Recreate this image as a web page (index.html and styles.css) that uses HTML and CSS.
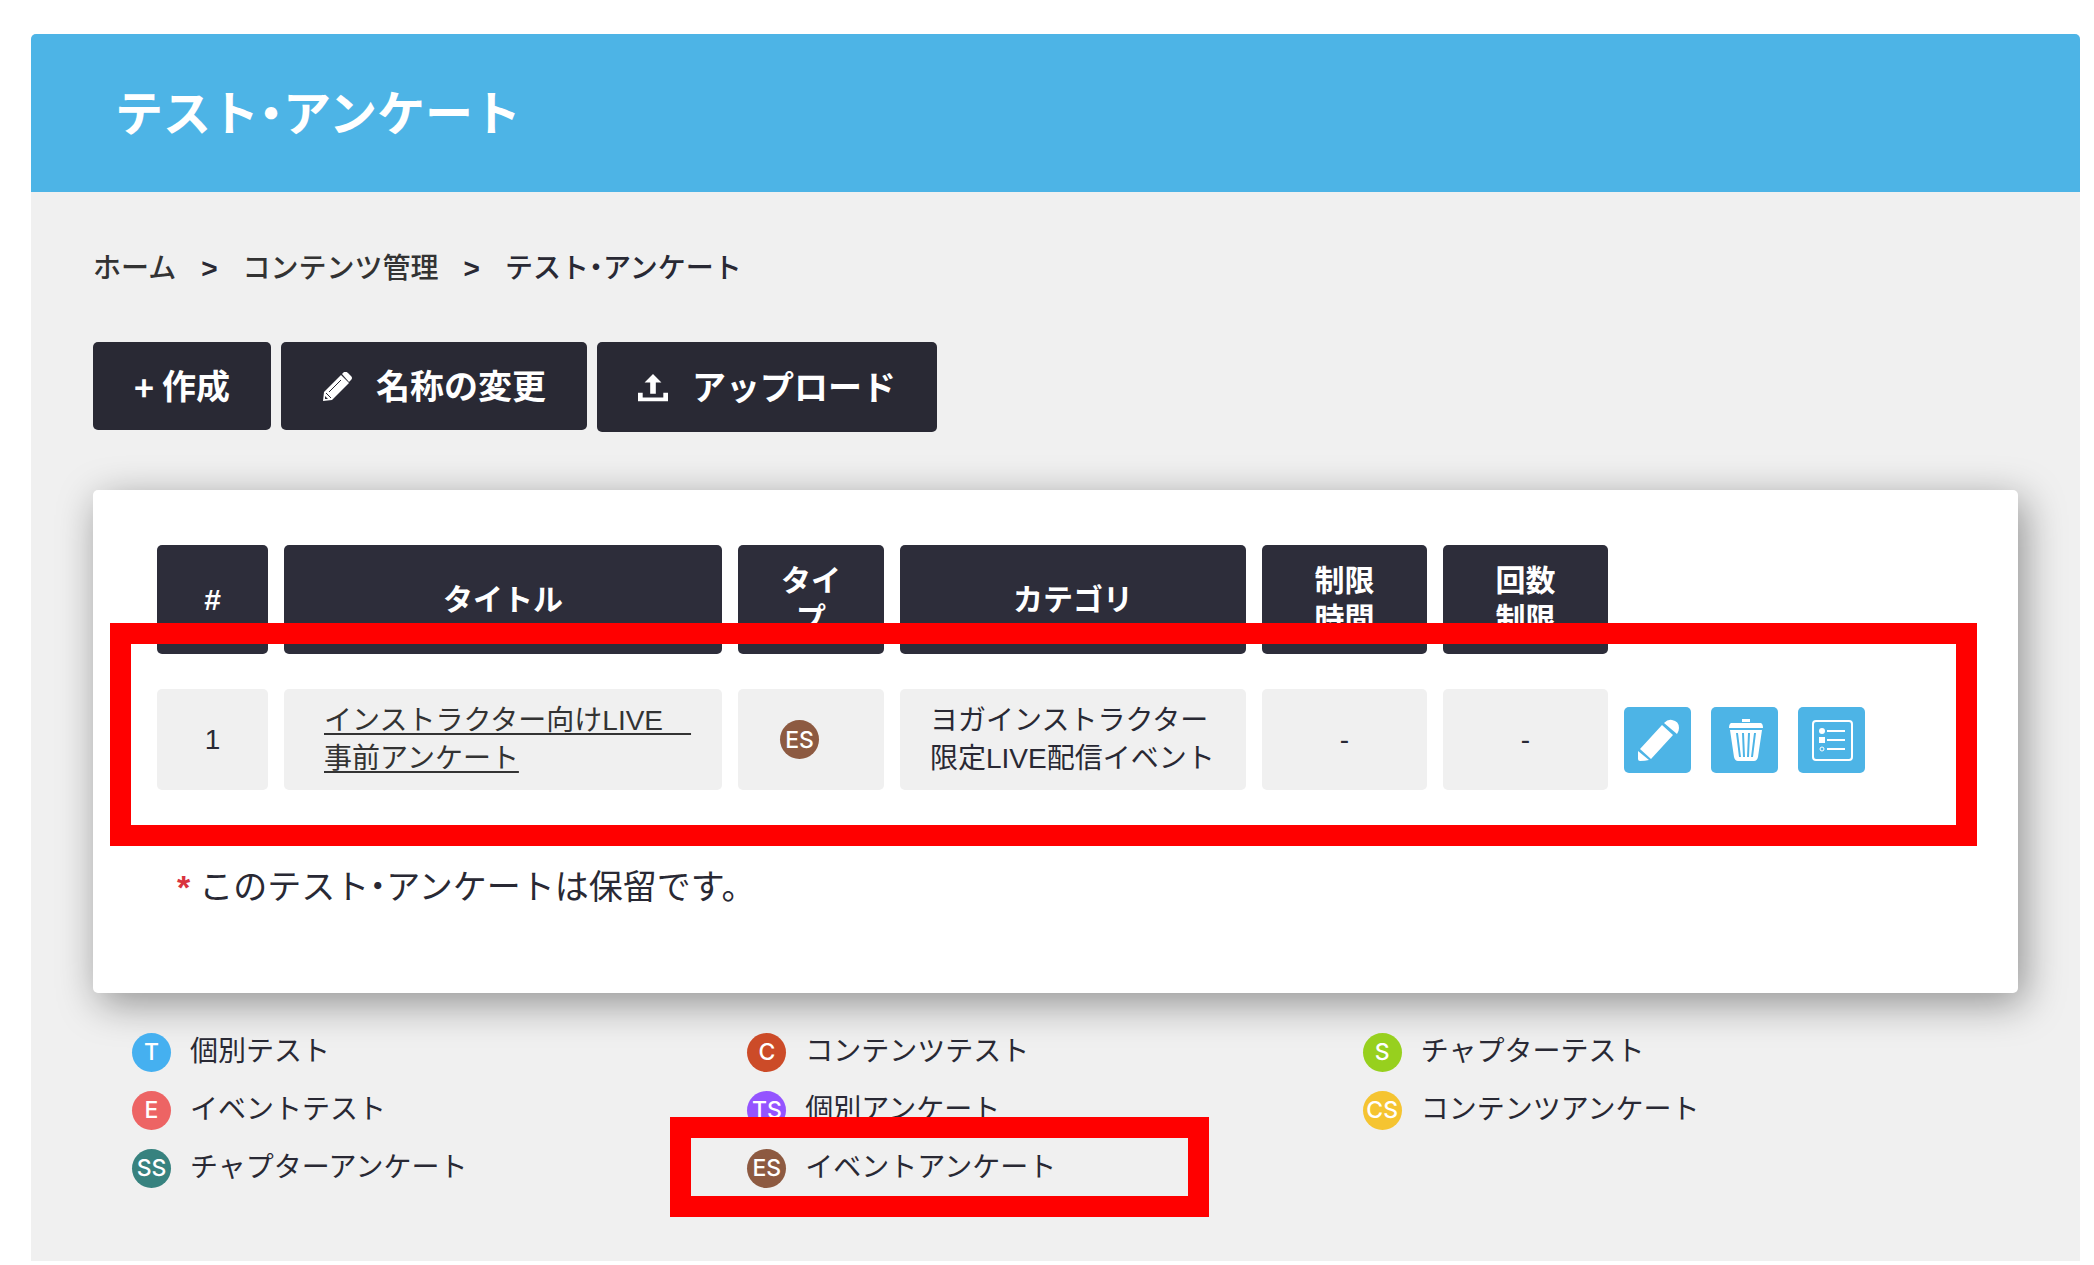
FILE: index.html
```html
<!DOCTYPE html>
<html lang="ja">

<head>
    <meta charset="UTF-8">
    <meta name="viewport" content="width=device-width, initial-scale=1.0">
    <title>テスト・アンケート</title>
    <link rel="stylesheet" href="styles.css">
</head>

<body>
    <div class="page">
        <header class="page-header">
            <h1>テスト・アンケート</h1>
        </header>

        <main class="content">
            <nav class="breadcrumb">
                <a href="#">ホーム</a>
                <span class="separator">&gt;</span>
                <a href="#">コンテンツ管理</a>
                <span class="separator">&gt;</span>
                <span class="current">テスト・アンケート</span>
            </nav>

            <div class="toolbar">
                <button type="button" class="btn btn-create"><span class="plus">+</span>作成</button>
                <button type="button" class="btn btn-rename">
                    <svg class="btn-icon" viewBox="0 0 30 30" aria-hidden="true">
                        <path fill="#fff" d="M1 29l1-9L19 3l8 8L10 28zM20 2l2-2q2-1 4 1l3 3q2 2 0 4l-2 2z" />
                        <path fill="none" stroke="#292934" stroke-width="1" d="M7 20L19 8M4 21l5 5" />
                        <path fill="#292934" d="M3 24l3 3-3 0z" />
                    </svg>
                    名称の変更
                </button>
                <button type="button" class="btn btn-upload">
                    <svg class="btn-icon" viewBox="0 0 32 30" aria-hidden="true">
                        <path fill="#fff" d="M16 0l9 9h-6v12h-6V9H7zM0 20h5v5h22v-5h5v9H0z" />
                    </svg>
                    アップロード
                </button>
            </div>

            <section class="card">
                <table class="test-table">
                    <colgroup>
                        <col class="col-number">
                        <col class="col-title">
                        <col class="col-type">
                        <col class="col-category">
                        <col class="col-limit">
                        <col class="col-limit">
                        <col>
                    </colgroup>
                    <thead>
                        <tr>
                            <th>#</th>
                            <th>タイトル</th>
                            <th>タイ<br>プ</th>
                            <th>カテゴリ</th>
                            <th>制限<br>時間</th>
                            <th>回数<br>制限</th>
                        </tr>
                    </thead>
                    <tbody>
                        <tr>
                            <td>1</td>
                            <td class="cell-title"><a href="#">インストラクター向けLIVE　<br>事前アンケート</a></td>
                            <td class="cell-type"><span class="badge badge-es">ES</span></td>
                            <td class="cell-category">ヨガインストラクター<br>限定LIVE配信イベント</td>
                            <td>-</td>
                            <td>-</td>
                            <td class="cell-actions">
                                <div class="actions">
                                    <button type="button" class="icon-btn" aria-label="編集">
                                        <svg viewBox="0 0 42 42" aria-hidden="true">
                                            <path fill="#fff" d="M3 30L25 6l11 10-22 24zM27 4q4-4 8-3 7 1 7 8 0 3-2 6zM1 32l11 9q-4 1-9 1-2 0-2-2z" />
                                        </svg>
                                    </button>
                                    <button type="button" class="icon-btn" aria-label="削除">
                                        <svg viewBox="0 0 42 42" aria-hidden="true">
                                            <path fill="#fff" d="M18 0h8v3h-8zM7 4h30q2 1 2 5H5q0-4 2-5zM6 11h32l-4 27q-1 4-4 4H14q-3 0-4-4z" />
                                            <path fill="none" stroke="#4db4e6" stroke-width="2" d="M13 14l3 24M19 14l1 24M25 14l-1 24M31 14l-3 24" />
                                        </svg>
                                    </button>
                                    <button type="button" class="icon-btn" aria-label="一覧">
                                        <svg viewBox="0 0 42 42" aria-hidden="true">
                                            <rect x="2" y="2" width="39" height="39" rx="3" fill="none" stroke="#fff" stroke-width="2" />
                                            <path fill="none" stroke="#fff" stroke-width="2" d="M16 12h18M16 21h18M16 30h18" />
                                            <circle cx="11" cy="12" r="3" fill="#fff" />
                                            <path fill="#fff" d="M8 18h6v6H8z" />
                                            <circle cx="11" cy="30" r="2" fill="none" stroke="#fff" stroke-width="1" />
                                        </svg>
                                    </button>
                                </div>
                            </td>
                        </tr>
                    </tbody>
                </table>
                <p class="note"><span class="asterisk">*</span>このテスト・アンケートは保留です。</p>
                <div class="highlight highlight-row"></div>
            </section>

            <ul class="legend">
                <li><span class="badge badge-t">T</span>個別テスト</li>
                <li><span class="badge badge-c">C</span>コンテンツテスト</li>
                <li><span class="badge badge-s">S</span>チャプターテスト</li>
                <li><span class="badge badge-e">E</span>イベントテスト</li>
                <li><span class="badge badge-ts">TS</span>個別アンケート</li>
                <li><span class="badge badge-cs">CS</span>コンテンツアンケート</li>
                <li><span class="badge badge-ss">SS</span>チャプターアンケート</li>
                <li><span class="badge badge-es">ES</span>イベントアンケート<span class="highlight highlight-legend"></span></li>
            </ul>
        </main>
    </div>
</body>

</html>
```
FILE: styles.css
```css
* {
    box-sizing: border-box;
}

body {
    margin: 0;
    padding: 34px 14px 4px 31px;
    background-color: #fff;
    color: #292934;
    font-family: "Liberation Sans", "Noto Sans CJK JP", sans-serif;
    font-size: 28px;
    line-height: 38px;
    font-feature-settings: "halt";
}

button {
    font-family: inherit;
    font-feature-settings: inherit;
    cursor: pointer;
}

.page {
    background-color: #f0f0f0;
    border-radius: 5px 5px 0 0;
}

.page-header {
    background-color: #4db4e6;
    border-radius: 5px 5px 0 0;
    padding: 49px 84px 45px;
}

.page-header h1 {
    margin: 0;
    color: #fff;
    font-size: 48px;
    line-height: 64px;
}

.content {
    padding: 57px 62px 64px;
}

/* Breadcrumb */
.breadcrumb {
    display: flex;
    gap: 25px;
    line-height: 40px;
    font-weight: 500;
}

.breadcrumb a {
    color: #333;
    text-decoration: none;
}

.separator {
    font-weight: bold;
}

/* Toolbar */
.toolbar {
    display: flex;
    align-items: flex-start;
    gap: 10px;
    margin-top: 53px;
}

.btn {
    display: flex;
    align-items: center;
    height: 88px;
    padding: 0 41px 4px;
    border: none;
    border-radius: 5px;
    background-color: #292934;
    color: #fff;
    font-size: 34px;
    font-weight: bold;
}

.btn-upload {
    height: 90px;
}

.btn-icon {
    width: 30px;
    height: 30px;
    margin: 6px 24px 0 0;
}

.plus {
    margin: 4px 8px 0 0;
    font-family: "Noto Sans CJK JP", sans-serif;
    font-size: 34px;
}

/* Card */
.card {
    position: relative;
    margin-top: 58px;
    padding: 20px 47px 82px 48px;
    border-radius: 5px;
    background-color: #fff;
    box-shadow: 6px 10px 40px rgba(0, 0, 0, 0.4);
}

.test-table {
    width: 100%;
    table-layout: fixed;
    border-collapse: separate;
    border-spacing: 16px 35px;
}

.col-number {
    width: 111px;
}

.col-title {
    width: 438px;
}

.col-type {
    width: 146px;
}

.col-category {
    width: 346px;
}

.col-limit {
    width: 165px;
}

.test-table th {
    height: 109px;
    padding: 0;
    border-radius: 5px;
    background-color: #2d2d3a;
    color: #fff;
    font-size: 30px;
}

.test-table td {
    height: 101px;
    padding: 0;
    border-radius: 5px;
    background-color: #f0f0f0;
    text-align: center;
    white-space: nowrap;
}

.test-table .cell-title {
    padding-left: 40px;
    text-align: left;
}

.cell-title a {
    color: #333;
    text-decoration-thickness: 2px;
    text-underline-offset: 3px;
}

.test-table .cell-type {
    padding-left: 42px;
    text-align: left;
}

.test-table .cell-category {
    padding-left: 30px;
    text-align: left;
}

.test-table .cell-actions {
    background-color: transparent;
}

.actions {
    display: flex;
    gap: 20px;
}

.icon-btn {
    display: flex;
    align-items: center;
    justify-content: center;
    width: 67px;
    height: 66px;
    padding: 0;
    border: none;
    border-radius: 5px;
    background-color: #4db4e6;
}

.icon-btn svg {
    width: 42px;
    height: 42px;
}

.note {
    margin: 38px 0 0;
    padding-left: 36px;
    font-size: 34px;
    line-height: 48px;
}

.asterisk {
    margin-right: 9px;
    color: #d9333f;
    font-weight: bold;
}

/* Type badges */
.badge {
    display: flex;
    align-items: center;
    justify-content: center;
    flex-shrink: 0;
    width: 39px;
    height: 39px;
    border-radius: 50%;
    color: #fff;
    font-family: "Inter", "Liberation Sans", sans-serif;
    font-size: 23px;
    font-weight: 500;
}

.badge-t {
    background-color: #45b0f0;
}

.badge-c {
    background-color: #cc4b28;
}

.badge-s {
    background-color: #97d01e;
}

.badge-e {
    background-color: #ed6464;
}

.badge-ts {
    background-color: #9454ff;
}

.badge-cs {
    background-color: #f5c431;
}

.badge-ss {
    background-color: #37827f;
}

.badge-es {
    background-color: #8d5a41;
}

.legend {
    display: grid;
    grid-template-columns: repeat(3, 1fr);
    margin: 30px 0 0;
    padding: 0 40px 0 39px;
    list-style: none;
}

.legend li {
    position: relative;
    display: flex;
    align-items: center;
    gap: 19px;
    height: 58px;
}

/* Red frames over the new row and its legend entry */
.highlight {
    position: absolute;
    border: 21px solid #f00;
    pointer-events: none;
}

.highlight-row {
    top: 133px;
    left: 17px;
    right: 41px;
    height: 223px;
}

.highlight-legend {
    top: -22px;
    left: -77px;
    width: 539px;
    height: 100px;
}
```
